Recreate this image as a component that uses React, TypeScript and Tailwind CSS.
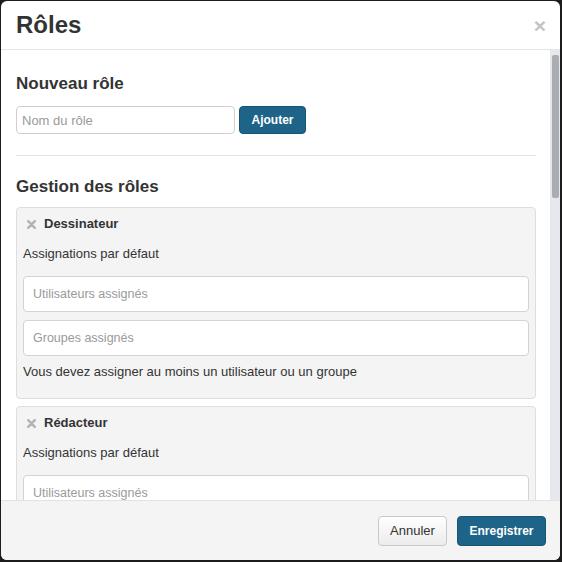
import React from "react";

const CrossIcon = () => (
  <svg width="9" height="9" viewBox="0 0 9 9" className="shrink-0">
    <path d="M1.2 1.2 L7.8 7.8 M7.8 1.2 L1.2 7.8" stroke="#b3b3b3" strokeWidth="2.4" strokeLinecap="round" />
  </svg>
);

const RolePanel = ({ name, withHint }: { name: string; withHint?: boolean }) => (
  <div className="border border-[#dedede] bg-[#f4f4f4] rounded-[4px] px-[6px] pt-[7px] pb-[17px] mb-[7px]">
    <div className="flex items-center h-[18px] pl-[4px]">
      <CrossIcon />
      <span className="ml-[8px] text-[13px] font-bold text-[#333]">{name}</span>
    </div>
    <div className="mt-[12px] h-[18px] leading-[18px] text-[13px] text-[#333]">Assignations par défaut</div>
    <input
      placeholder="Utilisateurs assignés"
      className="mt-[13px] block w-full h-[36px] bg-white border border-[#d3d3d3] rounded-[4px] px-[9px] text-[12.5px] text-[#333] placeholder:text-[#9a9a9a] outline-none"
    />
    {withHint && (
      <>
        <input
          placeholder="Groupes assignés"
          className="mt-[8px] block w-full h-[36px] bg-white border border-[#d3d3d3] rounded-[4px] px-[9px] text-[12.5px] text-[#333] placeholder:text-[#9a9a9a] outline-none"
        />
        <div className="mt-[7px] h-[18px] leading-[18px] text-[13px] text-[#333]">
          Vous devez assigner au moins un utilisateur ou un groupe
        </div>
      </>
    )}
  </div>
);

export default function App() {
  return (
    <div
      className="w-[562px] h-[562px] bg-[#1c1c1c] pl-px pt-px pr-[2px] pb-[2px]"
      style={{ fontFamily: '"Liberation Sans", Arial, sans-serif' }}
    >
      <div className="w-full h-full bg-white rounded-[6px] overflow-hidden flex flex-col">
        {/* header */}
        <div className="h-[49px] shrink-0 border-b border-[#e5e5e5] flex items-center justify-between pl-[15px] pr-[14px]">
          <h1 className="text-[24px] font-bold text-[#333] leading-none">Rôles</h1>
          <span className="text-[21px] font-bold text-[#c4c4c4] leading-none">×</span>
        </div>

        {/* body */}
        <div className="flex-1 flex min-h-0">
          <div className="flex-1 overflow-hidden pl-[15px] pr-[14px] pt-[16px]">
            <h2 className="mt-[8px] h-[19px] leading-[19px] text-[17px] font-bold text-[#333]">Nouveau rôle</h2>
            <div className="mt-[13px] flex gap-[4px]">
              <input
                placeholder="Nom du rôle"
                className="w-[219px] h-[28px] border border-[#cfcfcf] rounded-[4px] px-[5px] text-[13px] text-[#333] placeholder:text-[#9a9a9a] outline-none"
              />
              <button className="w-[67px] h-[28px] rounded-[4px] bg-[#1e6488] border border-[#185473] text-white text-[12px] font-bold">
                Ajouter
              </button>
            </div>
            <div className="mt-[21px] border-t border-[#e5e5e5]" />
            <h2 className="mt-[21px] h-[19px] leading-[19px] text-[17px] font-bold text-[#333]">Gestion des rôles</h2>
            <div className="mt-[11px]">
              <RolePanel name="Dessinateur" withHint />
              <RolePanel name="Rédacteur" />
            </div>
          </div>
          {/* scrollbar */}
          <div className="w-[10px] shrink-0 bg-[#e6e8ed] pt-[5px] pl-[2px] pr-px">
            <div className="h-[143px] bg-[#aaadb1] rounded-[2px]" />
          </div>
        </div>

        {/* footer */}
        <div className="h-[60px] shrink-0 border-t border-[#e2e2e2] bg-[#f4f4f4] flex justify-end gap-[10px] pt-[15px] pr-[14px]">
          <button className="w-[69px] h-[30px] rounded-[4px] border border-[#c8c8c8] bg-gradient-to-b from-white to-[#ececec] text-[13px] text-[#333]">
            Annuler
          </button>
          <button className="w-[89px] h-[30px] rounded-[4px] bg-[#1e6488] border border-[#185473] text-white text-[12px] font-bold">
            Enregistrer
          </button>
        </div>
      </div>
    </div>
  );
}
